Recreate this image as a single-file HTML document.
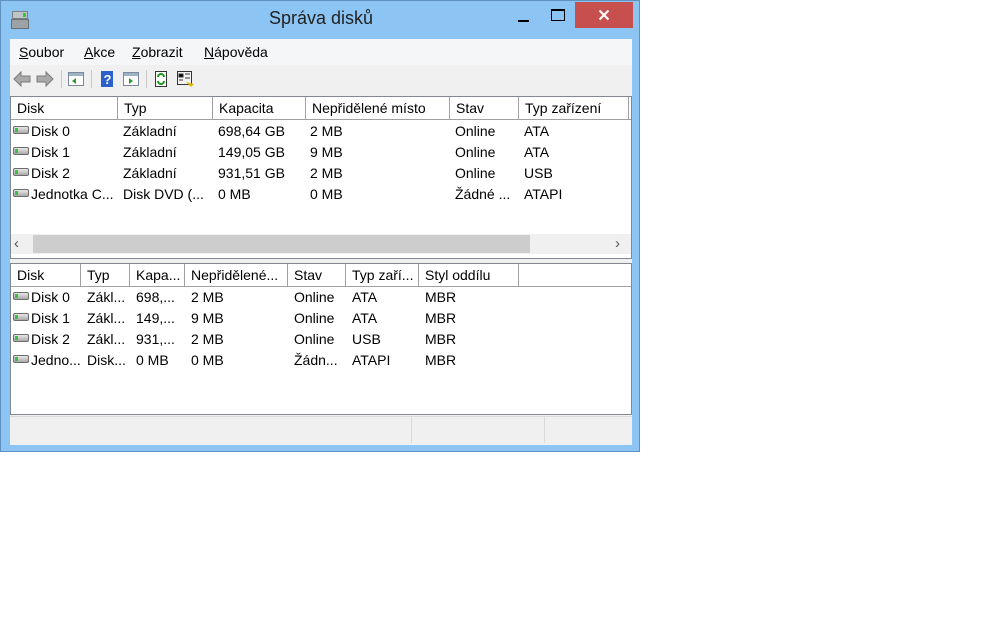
<!DOCTYPE html>
<html><head><meta charset="utf-8">
<style>
*{margin:0;padding:0;box-sizing:border-box}
body{width:1008px;height:630px;background:#fff;position:relative;overflow:hidden;font-family:"Liberation Sans",sans-serif;font-size:14px;color:#000}
.a{position:absolute}
#win{left:0;top:0;width:640px;height:452px;background:#8cc4f3;border:1px solid #5f92c0}
.title{left:0;top:7px;width:640px;text-align:center;font-size:18px;color:#222}
.client{left:9px;top:38px;width:622px;height:406px;background:#f0f0f0}
.menu span{position:absolute;top:5px}
u{text-decoration:underline}
.list{background:#fff;border:1px solid #828790}
.hdr{position:absolute;height:23px;border-right:1px solid #a0a0a0;border-bottom:1px solid #a0a0a0;background:#fff;padding-left:6px;line-height:22px;white-space:nowrap;overflow:hidden}
.row{position:absolute;white-space:nowrap;line-height:16px}
.di{position:absolute;width:16px;height:8px;border:1px solid #6c6c6c;border-radius:2px;background:linear-gradient(#e8e8e8,#a9a9a9)}
.di::after{content:"";position:absolute;left:1px;top:1px;width:3px;height:4px;background:#3fbf3f}
.sep{position:absolute;top:69px;width:1px;height:18px;background:#c8c8c8}
</style></head><body>
<div id="win" class="a">
  <div class="a" style="left:9px;top:9px;width:20px;height:20px">
    <div class="a" style="left:2px;top:1px;width:16px;height:8px;background:#c0c4c8;border:1px solid #7b7f84"></div>
    <div class="a" style="left:13px;top:3px;width:3px;height:4px;background:#3c3"></div>
    <div class="a" style="left:1px;top:9px;width:18px;height:10px;background:#9da2a7;border:1px solid #6c7075"></div>
  </div>
  <div class="a title">Správa disků</div>
  <div class="a" style="left:517px;top:19px;width:11px;height:2px;background:#000"></div>
  <div class="a" style="left:550px;top:8px;width:14px;height:12px;border:1px solid #000;border-top-width:2px"></div>
  <div class="a" style="left:574px;top:1px;width:58px;height:26px;background:#c7504f"></div>
  <svg class="a" style="left:597px;top:8px" width="12" height="12"><path d="M1.5 1.5L10.5 10.5M10.5 1.5L1.5 10.5" stroke="#fff" stroke-width="2"/></svg>
  <div class="a client">
    <div class="a menu" style="left:0;top:0;width:622px;height:26px;background:#f5f6f7">
      <span style="left:9px"><u>S</u>oubor</span>
      <span style="left:74px"><u>A</u>kce</span>
      <span style="left:122px"><u>Z</u>obrazit</span>
      <span style="left:194px"><u>N</u>ápověda</span>
    </div>
  </div>
  <svg class="a" style="left:12px;top:69px" width="185" height="18" viewBox="0 0 185 18">
    <path d="M1 9 L8 2 L8 6 L17 6 L17 12 L8 12 L8 16 Z" fill="#a9a9a9" stroke="#7d7d7d"/>
    <path d="M40 9 L33 2 L33 6 L24 6 L24 12 L33 12 L33 16 Z" fill="#a9a9a9" stroke="#7d7d7d"/>
    <rect x="55.5" y="2.5" width="15" height="13" fill="#fff" stroke="#7a8a9a"/><rect x="56" y="3" width="14" height="3" fill="#9fb3c8"/><path d="M63 8 L59 11 L63 14Z" fill="#2a9a2a"/>
    <rect x="88" y="1" width="12" height="16" fill="#2b5fc9"/><text x="90.5" y="14" font-size="13" font-family="Liberation Sans" fill="#fff" font-weight="bold">?</text>
    <rect x="110.5" y="2.5" width="15" height="13" fill="#fff" stroke="#7a8a9a"/><rect x="111" y="3" width="14" height="3" fill="#9fb3c8"/><path d="M116 8 L120 11 L116 14Z" fill="#2a9a2a"/>
    <rect x="142.5" y="1.5" width="11" height="15" fill="#fff" stroke="#333"/><path d="M145 7 A3 3 0 0 1 151 7 M151 11 A3 3 0 0 1 145 11" stroke="#1a9a1a" stroke-width="2" fill="none"/>
    <rect x="164.5" y="1.5" width="14" height="13" fill="#f4f4f4" stroke="#333"/><path d="M166 4h4v3h-4zM172 4h5M172 8h5M166 10h4" stroke="#333"/><path d="M173 12 l5 5 l3 -3 z" fill="#e0b800"/>
  </svg>
  <div class="sep" style="left:60px"></div><div class="sep" style="left:90px"></div><div class="sep" style="left:145px"></div>

  <div class="a list" style="left:9px;top:95px;width:622px;height:163px;overflow:hidden">
    <div class="hdr" style="left:0;width:107px">Disk</div>
    <div class="hdr" style="left:107px;width:95px">Typ</div>
    <div class="hdr" style="left:202px;width:93px">Kapacita</div>
    <div class="hdr" style="left:295px;width:144px">Nepřidělené místo</div>
    <div class="hdr" style="left:439px;width:69px">Stav</div>
    <div class="hdr" style="left:508px;width:110px">Typ zařízení</div>
    <div class="hdr" style="left:618px;width:10px;border-right:none"></div>
  </div>
  <div class="a" style="left:10px;top:233px;width:620px;height:20px;background:#f0f0f0"></div>
  <div class="a" style="left:32px;top:234px;width:497px;height:18px;background:#cdcdcd"></div>
  <div class="a" style="left:13px;top:234px;font-size:15px;color:#555">‹</div>
  <div class="a" style="left:614px;top:234px;font-size:15px;color:#555">›</div>

  <div class="a list" style="left:9px;top:262px;width:622px;height:152px;overflow:hidden">
    <div class="hdr" style="left:0;width:70px">Disk</div>
    <div class="hdr" style="left:70px;width:49px">Typ</div>
    <div class="hdr" style="left:119px;width:55px">Kapa...</div>
    <div class="hdr" style="left:174px;width:103px">Nepřidělené...</div>
    <div class="hdr" style="left:277px;width:58px">Stav</div>
    <div class="hdr" style="left:335px;width:73px">Typ zaří...</div>
    <div class="hdr" style="left:408px;width:100px">Styl oddílu</div>
    <div class="hdr" style="left:508px;width:112px;border-right:none"></div>
  </div>
  <div class="a" style="left:9px;top:415px;width:622px;height:29px;background:#f0f0f0;border-top:1px solid #dadada"></div>
  <div class="a" style="left:410px;top:416px;width:1px;height:26px;background:#dadada"></div>
  <div class="a" style="left:543px;top:416px;width:1px;height:26px;background:#dadada"></div>
</div>

<div class="di" style="left:13px;top:126px"></div><div class="di" style="left:13px;top:147px"></div><div class="di" style="left:13px;top:168px"></div>
<div class="di" style="left:13px;top:189px"></div>
<div class="row" style="left:31px;top:123px">Disk 0</div><div class="row" style="left:123px;top:123px">Základní</div><div class="row" style="left:218px;top:123px">698,64 GB</div><div class="row" style="left:310px;top:123px">2 MB</div><div class="row" style="left:455px;top:123px">Online</div><div class="row" style="left:524px;top:123px">ATA</div>
<div class="row" style="left:31px;top:144px">Disk 1</div><div class="row" style="left:123px;top:144px">Základní</div><div class="row" style="left:218px;top:144px">149,05 GB</div><div class="row" style="left:310px;top:144px">9 MB</div><div class="row" style="left:455px;top:144px">Online</div><div class="row" style="left:524px;top:144px">ATA</div>
<div class="row" style="left:31px;top:165px">Disk 2</div><div class="row" style="left:123px;top:165px">Základní</div><div class="row" style="left:218px;top:165px">931,51 GB</div><div class="row" style="left:310px;top:165px">2 MB</div><div class="row" style="left:455px;top:165px">Online</div><div class="row" style="left:524px;top:165px">USB</div>
<div class="row" style="left:31px;top:186px">Jednotka C...</div><div class="row" style="left:123px;top:186px">Disk DVD (...</div><div class="row" style="left:218px;top:186px">0 MB</div><div class="row" style="left:310px;top:186px">0 MB</div><div class="row" style="left:455px;top:186px">Žádné ...</div><div class="row" style="left:524px;top:186px">ATAPI</div>

<div class="di" style="left:13px;top:292px"></div><div class="di" style="left:13px;top:313px"></div><div class="di" style="left:13px;top:334px"></div><div class="di" style="left:13px;top:355px"></div>
<div class="row" style="left:31px;top:289px">Disk 0</div><div class="row" style="left:87px;top:289px">Zákl...</div><div class="row" style="left:136px;top:289px">698,...</div><div class="row" style="left:191px;top:289px">2 MB</div><div class="row" style="left:294px;top:289px">Online</div><div class="row" style="left:352px;top:289px">ATA</div><div class="row" style="left:425px;top:289px">MBR</div>
<div class="row" style="left:31px;top:310px">Disk 1</div><div class="row" style="left:87px;top:310px">Zákl...</div><div class="row" style="left:136px;top:310px">149,...</div><div class="row" style="left:191px;top:310px">9 MB</div><div class="row" style="left:294px;top:310px">Online</div><div class="row" style="left:352px;top:310px">ATA</div><div class="row" style="left:425px;top:310px">MBR</div>
<div class="row" style="left:31px;top:331px">Disk 2</div><div class="row" style="left:87px;top:331px">Zákl...</div><div class="row" style="left:136px;top:331px">931,...</div><div class="row" style="left:191px;top:331px">2 MB</div><div class="row" style="left:294px;top:331px">Online</div><div class="row" style="left:352px;top:331px">USB</div><div class="row" style="left:425px;top:331px">MBR</div>
<div class="row" style="left:31px;top:352px">Jedno...</div><div class="row" style="left:87px;top:352px">Disk...</div><div class="row" style="left:136px;top:352px">0 MB</div><div class="row" style="left:191px;top:352px">0 MB</div><div class="row" style="left:294px;top:352px">Žádn...</div><div class="row" style="left:352px;top:352px">ATAPI</div><div class="row" style="left:425px;top:352px">MBR</div>
</body></html>
